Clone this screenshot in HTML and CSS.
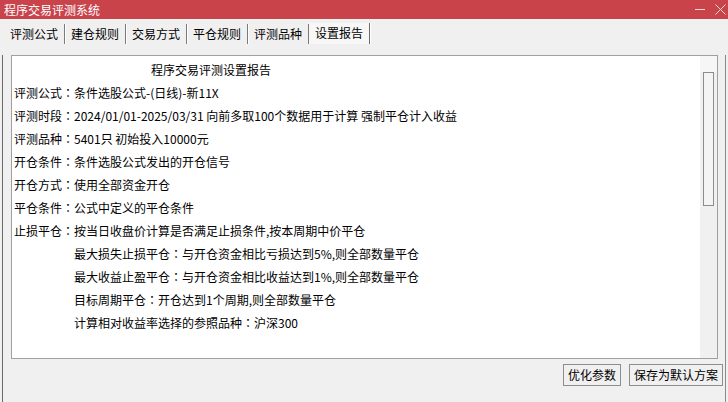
FILE: index.html
```html
<!DOCTYPE HTML>
<html>
<head>
    <meta charset="UTF-8">
    <title>程序交易评测系统</title>
    <link rel="stylesheet" href="styles.css">
</head>
<body>
<div id="win">

    <div class="titlebar">
        <span class="title">程序交易评测系统</span>
        <span class="ctrl min"></span>
        <span class="ctrl close">
            <svg width="11" height="11" viewBox="0 0 11 11"><path d="M0.5 0.5L10.5 10.5M10.5 0.5L0.5 10.5" stroke="#f6d6d8" stroke-width="1"/></svg>
        </span>
    </div>

    <ul class="tabs">
        <li>评测公式</li>
        <li>建仓规则</li>
        <li>交易方式</li>
        <li>平仓规则</li>
        <li>评测品种</li>
        <li class="on">设置报告</li>
    </ul>

    <div class="page">
        <div class="report">
            <div class="text">
                <p class="head">程序交易评测设置报告</p>
                <p>评测公式<i>：</i>条件选股公式-(日线)-新11X</p>
                <p>评测时段<i>：</i>2024/01/01-2025/03/31 向前多取100个数据用于计算 强制平仓计入收益</p>
                <p>评测品种<i>：</i>5401只 初始投入10000元</p>
                <p>开仓条件<i>：</i>条件选股公式发出的开仓信号</p>
                <p>开仓方式<i>：</i>使用全部资金开仓</p>
                <p>平仓条件<i>：</i>公式中定义的平仓条件</p>
                <p>止损平仓<i>：</i>按当日收盘价计算是否满足止损条件,按本周期中价平仓</p>
                <p class="sub">最大损失止损平仓<i>：</i>与开仓资金相比亏损达到5%,则全部数量平仓</p>
                <p class="sub">最大收益止盈平仓<i>：</i>与开仓资金相比收益达到1%,则全部数量平仓</p>
                <p class="sub">目标周期平仓<i>：</i>开仓达到1个周期,则全部数量平仓</p>
                <p class="sub">计算相对收益率选择的参照品种<i>：</i>沪深300</p>
            </div>
            <div class="scroll">
                <div class="arrow"></div>
                <div class="thumb"></div>
            </div>
        </div>
        <div class="btns">
            <button>优化参数</button>
            <button>保存为默认方案</button>
        </div>
    </div>

    <div class="foot">
        <div class="group">
            <span></span><span></span><span></span><span></span><span></span>
        </div>
        <div class="group">
            <span class="wide"></span><span></span><span></span><span></span>
        </div>
    </div>

</div>
</body>
</html>
```

FILE: styles.css
```css
body{margin:0;font-family:"Noto Sans CJK SC","Microsoft YaHei",sans-serif;font-size:12px;color:#000;}
p{margin:0;}
ul,li{margin:0;padding:0;list-style:none;}

#win{
    width: 728px;
    height: 402px;
    overflow: hidden;
    background: #f0f0f0;
}

/* 标题栏 */
.titlebar{
    display: flex;
    align-items: center;
    height: 19px;
    padding-left: 4px;
    background: #c9434b;
    color: #fff;
}
.titlebar .title{
    flex: 1;
    line-height: 19px;
}
.titlebar .ctrl{
    display: flex;
    align-items: center;
    justify-content: center;
}
.titlebar .min{
    width: 10px;
    height: 1px;
    margin-right: 10px;
    background: #f6d6d8;
}
.titlebar .close{
    width: 11px;
    height: 11px;
    margin-right: 2px;
}

/* 选项卡 */
.tabs{
    display: flex;
    align-items: flex-end;
    height: 25px;
    padding-left: 4px;
}
.tabs li{
    height: 20px;
    padding: 0 6px;
    border-right: 1px solid #7a7a7a;
    line-height: 20px;
    box-shadow: 1px 0 0 #fff;
}
.tabs li.on{
    height: 21px;
    background: #f7f7f7;
    border-right-color: #6a6a6a;
}

/* 页面框 */
.page{
    height: 350px;
    margin: 0 2px;
    border-left: 1px solid #6a6a6a;
    border-right: 1px solid #8a8a8a;
    border-bottom: 2px solid #a0a0a0;
    box-sizing: border-box;
}
.report{
    display: flex;
    width: 707px;
    height: 304px;
    margin: 11px 0 0 8px;
    border: 1px solid #a0a0a0;
    box-sizing: border-box;
    background: #fff;
}
.report .text{
    flex: 1;
    padding: 2px 0 0 2px;
}
.report p{
    line-height: 23px;
    white-space: nowrap;
}
.report p i{
    font-style: normal;
    font-family: "Noto Sans CJK TC",sans-serif;
}
.report p.head{
    padding-left: 137px;
}
.report p.sub{
    padding-left: 60px;
}
.scroll{
    width: 17px;
    background: #f0f0f0;
}
.scroll .arrow{
    height: 16px;
    background: #f6f6f6;
}
.scroll .thumb{
    width: 9px;
    height: 132px;
    margin-left: 3px;
    border: 1px solid #8c8c8c;
    background: #f4f4f4;
}
.btns{
    display: flex;
    justify-content: flex-end;
    gap: 8px;
    padding: 5px 2px 0 0;
}
.btns button{
    height: 22px;
    padding: 0 4px;
    border: 1px solid #8e8e8e;
    background: #f0f0f0;
    font: inherit;
    line-height: 20px;
}

/* 底部按钮 */
.foot{
    display: flex;
    justify-content: space-between;
    padding: 4px 0 0 6px;
}
.foot .group{
    display: flex;
    gap: 7px;
}
.foot span{
    width: 54px;
    height: 8px;
    border: 1px solid #7a7a7a;
}
.foot span.wide{
    width: 63px;
}
```
